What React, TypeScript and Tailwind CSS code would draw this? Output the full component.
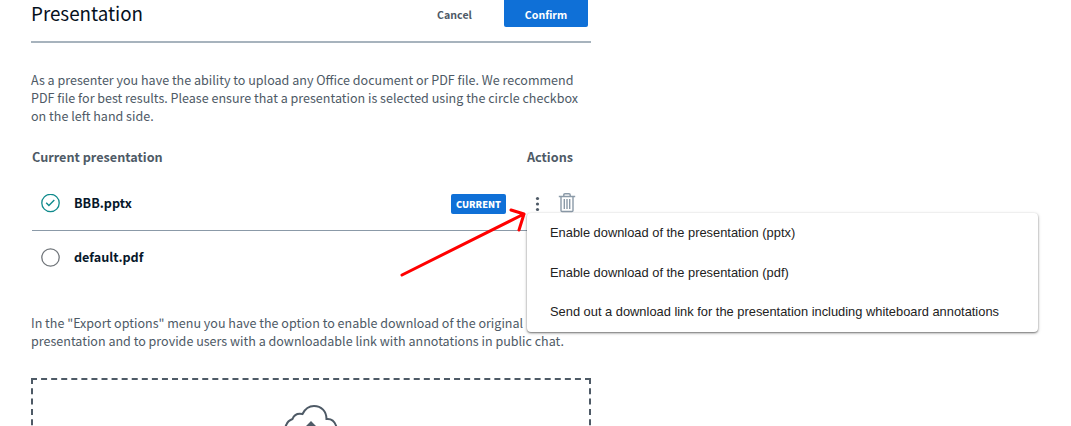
import type { ReactNode } from "react";

const sans = "font-['Noto_Sans_CJK_SC','Noto_Sans',sans-serif]";

function Lines({ lines }: { lines: string[] }) {
  return (
    <p className="text-[12.54px] leading-[18px] text-[#4e5a66]">
      {lines.map((line) => (
        <span key={line} className="block whitespace-nowrap">{line}</span>
      ))}
    </p>
  );
}

function Row({ icon, name, children }: { icon: ReactNode; name: string; children?: ReactNode }) {
  return (
    <div className="ml-px flex h-[53px] items-center">
      <div className="ml-[8px] h-5 w-5">{icon}</div>
      <span className="ml-[14px] text-[12.6px] font-bold text-[#06172a]">{name}</span>
      {children}
    </div>
  );
}

function CheckedCircle() {
  return (
    <svg width="20" height="20" viewBox="0 0 20 20" fill="none" stroke="#0f8a8c">
      <circle cx="10.5" cy="9" r="8.7" strokeWidth="1.3" />
      <path d="M6.2 8.7l2.7 2.7 5.4-5.4" strokeWidth="1.4" />
    </svg>
  );
}

function EmptyCircle() {
  return (
    <svg width="20" height="20" viewBox="0 0 20 20" fill="none" stroke="#70757a">
      <circle cx="10.5" cy="9.5" r="8.7" strokeWidth="1.3" />
    </svg>
  );
}

function Dots() {
  return (
    <svg width="6" height="16" viewBox="0 0 6 16" fill="#4e5a66">
      <circle cx="3.5" cy="2.5" r="1.6" />
      <circle cx="3.5" cy="8" r="1.6" />
      <circle cx="3.5" cy="13.5" r="1.6" />
    </svg>
  );
}

function Trash() {
  return (
    <svg width="18" height="20" viewBox="0 0 18 20" fill="none" stroke="#8b9aa8" strokeWidth="1.4">
      <path d="M0.8 3.5h16.4M5.8 3.2V2q0-1.200 1.200-1.200h4q1.200 0 1.200 1.200v1.200M3 3.500v14q0 1 1 1h10q1 0 1-1v-14M6.300 6v10M9 6v10M11.700 6v10" />
    </svg>
  );
}

function CloudUpload() {
  return (
    <svg width="60" height="44" viewBox="0 0 60 44" fill="none" stroke="#4e5a66" strokeWidth="2">
      <path d="M8 34C3 31 3.500 27 5.500 23.500C6.500 20.500 9 19 11.500 18C13 14 16.500 12 21.500 13C24 8 28 5 33 5C40.500 5 45.500 10.500 45.500 18C50 17.500 53.500 20.500 55 24.500C56 29 53 33 49 34" />
      <path d="M30 20l8 8h-5v10h-6v-10h-5z" fill="#4e5a66" stroke="none" />
    </svg>
  );
}

const options = [
  "Enable download of the presentation (pptx)",
  "Enable download of the presentation (pdf)",
  "Send out a download link for the presentation including whiteboard annotations",
];

export default function App() {
  return (
    <div className={`relative h-[426px] w-[1071px] overflow-hidden bg-white ${sans}`}>
      <main className="ml-[31px] w-[560px]">
        <header className="flex h-[43px] items-start border-b-2 border-[#a7b3bd]">
          <h1 className="h-[25px] text-[18.8px] leading-[25px] text-[#06101c]">Presentation</h1>
          <div className="ml-auto mr-[3px] flex h-[27px] text-[10.6px] font-bold leading-[29px]">
            <button className="w-[99px] text-center leading-[29px] text-[#4e5a66]">Cancel</button>
            <button className="w-[84px] rounded-b-[2px] bg-[#0f70d7] text-center leading-[29px] text-white">Confirm</button>
          </div>
        </header>

        <div className="pt-[28px]">
          <Lines
            lines={[
              "As a presenter you have the ability to upload any Office document or PDF file. We recommend",
              "PDF file for best results. Please ensure that a presentation is selected using the circle checkbox",
              "on the left hand side.",
            ]}
          />
        </div>

        <div className="mt-[23px] flex h-[18px] justify-between pl-px pr-[18px] text-[12.65px] font-bold leading-[18px] text-[#4e5a66]">
          <span>Current presentation</span>
          <span>Actions</span>
        </div>

        <section className="mt-[11px]">
          <Row icon={<CheckedCircle />} name="BBB.pptx">
            <span className="ml-auto mt-px flex h-5 w-[55px] items-center justify-center rounded-[2px] bg-[#0f70d7] pt-px text-[9.25px] font-black text-white">
              CURRENT
            </span>
            <span className="ml-[28px]"><Dots /></span>
            <span className="mb-[2px] ml-[18px] mr-[15px]"><Trash /></span>
          </Row>
          <div className="ml-px border-t border-[#8b9aa8]" />
          <Row icon={<EmptyCircle />} name="default.pdf" />
        </section>

        <div className="mt-[30px]">
          <Lines
            lines={[
              'In the "Export options" menu you have the option to enable download of the original',
              "presentation and to provide users with a downloadable link with annotations in public chat.",
            ]}
          />
        </div>

        <div className="mt-[28px] flex h-[140px] justify-center border-2 border-dashed border-[#4e5a66] pt-[21px]">
          <CloudUpload />
        </div>
      </main>

      <svg className="absolute left-[396px] top-[204px]" width="136" height="76" viewBox="0 0 136 76" fill="none" stroke="#ff0000" strokeWidth="3" strokeLinecap="round" strokeLinejoin="round">
        <path d="M6 71L128 10M115 6l13 4-5 16" />
      </svg>

      <ul className="absolute left-[527px] top-[213px] flex h-[119px] w-[511px] flex-col rounded-[4px] bg-white font-['Liberation_Sans',Arial,sans-serif] text-[12.87px] text-[#222222] shadow-[0_1px_2px_rgba(0,0,0,0.5),0_1px_4px_rgba(0,0,0,0.14)]">
        {options.map((label) => (
          <li key={label} className="flex h-[39.6px] items-center whitespace-nowrap pl-[23px]">{label}</li>
        ))}
      </ul>
    </div>
  );
}
